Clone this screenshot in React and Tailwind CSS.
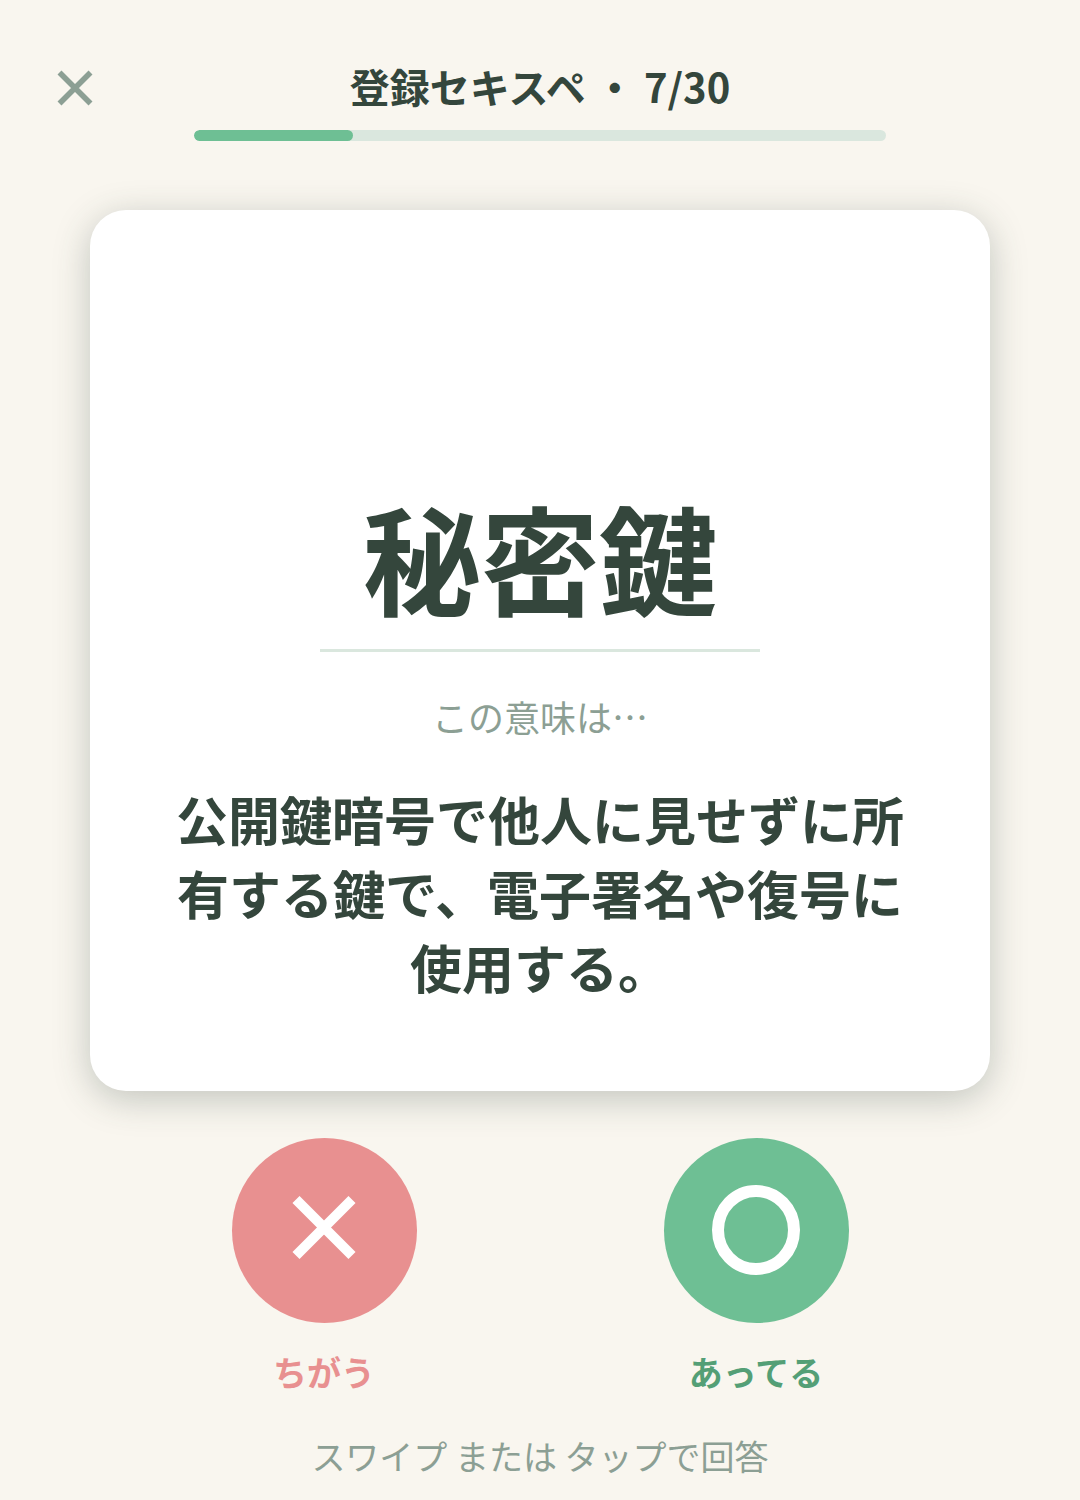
const QUIZ = {
  deck: '登録セキスペ',
  current: 7,
  total: 30,
  term: '秘密鍵',
  prompt: 'この意味は…',
  meaning: '公開鍵暗号で他人に見せずに所有する鍵で、電子署名や復号に使用する。',
}

function QuizHeader({ deck, current, total }) {
  const pct = Math.round((current / total) * 100)

  return (
    <header className="relative w-full pt-[58px] flex flex-col items-center">
      <button
        type="button"
        aria-label="閉じる"
        className="absolute left-[57px] top-[70px] w-9 h-9 text-[#8c9f94]"
      >
        <svg viewBox="0 0 36 36" className="w-9 h-9" fill="none" stroke="currentColor" strokeWidth="5.6">
          <path d="M2.5 2.5 L33.5 33.5 M33.5 2.5 L2.5 33.5" />
        </svg>
      </button>
      <h1 className="text-[40px] leading-14 font-bold whitespace-pre">
        {deck} ・ {current}/{total}
      </h1>
      <div
        role="progressbar"
        aria-label="進捗"
        aria-valuenow={current}
        aria-valuemin={0}
        aria-valuemax={total}
        className="mt-4 w-[64%] h-[11px] rounded-full bg-[#dae7de] overflow-hidden"
      >
        <div className="h-full rounded-full bg-[#6ebf94]" style={{ width: `${pct}%` }} />
      </div>
    </header>
  )
}

function QuestionCard({ term, prompt, meaning }) {
  return (
    <main className="mx-[90px] mt-[69px] min-h-[881px] px-20 pb-[87px] rounded-[36px] bg-white shadow-[0_8px_36px_rgba(52,70,60,0.28)] flex flex-col items-center justify-end text-center">
      <h2 className="text-[118px] leading-[150px] font-bold">{term}</h2>
      <div className="mt-[18px] w-[440px] h-[3px] bg-[#dae7de]" />
      <p className="mt-[38px] text-[36px] leading-[52px] text-[#8c9f94]">{prompt}</p>
      <p className="mt-10 text-[52px] leading-[74px] font-bold">{meaning}</p>
    </main>
  )
}

function AnswerButton({ label, color, textColor, children }) {
  return (
    <button type="button" className="flex flex-col items-center">
      <span className={`w-[185px] h-[185px] rounded-full ${color}`}>
        <svg viewBox="0 0 185 185" className="w-full h-full" fill="none" stroke="white">
          {children}
        </svg>
      </span>
      <span className={`mt-6 text-[34px] leading-[50px] font-bold ${textColor}`}>{label}</span>
    </button>
  )
}

export default function App() {
  return (
    <div className="min-h-screen bg-[#f9f6ef] text-[#34463c] font-['Noto_Sans_CJK_JP',sans-serif]" lang="ja">
      <QuizHeader deck={QUIZ.deck} current={QUIZ.current} total={QUIZ.total} />
      <QuestionCard term={QUIZ.term} prompt={QUIZ.prompt} meaning={QUIZ.meaning} />
      <div className="mt-[47px] px-[10%] grid grid-cols-2">
        <AnswerButton label="ちがう" color="bg-[#e89090]" textColor="text-[#e89090]">
          <path d="M64 61.5 L120 117.5 M120 61.5 L64 117.5" strokeWidth="10" />
        </AnswerButton>
        <AnswerButton label="あってる" color="bg-[#6ebf94]" textColor="text-[#549f76]">
          <ellipse cx="92" cy="92" rx="38" ry="39" strokeWidth="12" />
        </AnswerButton>
      </div>
      <p className="mt-[34px] text-center text-[34px] leading-[50px] text-[#8c9f94]">
        スワイプ または タップで回答
      </p>
    </div>
  )
}
